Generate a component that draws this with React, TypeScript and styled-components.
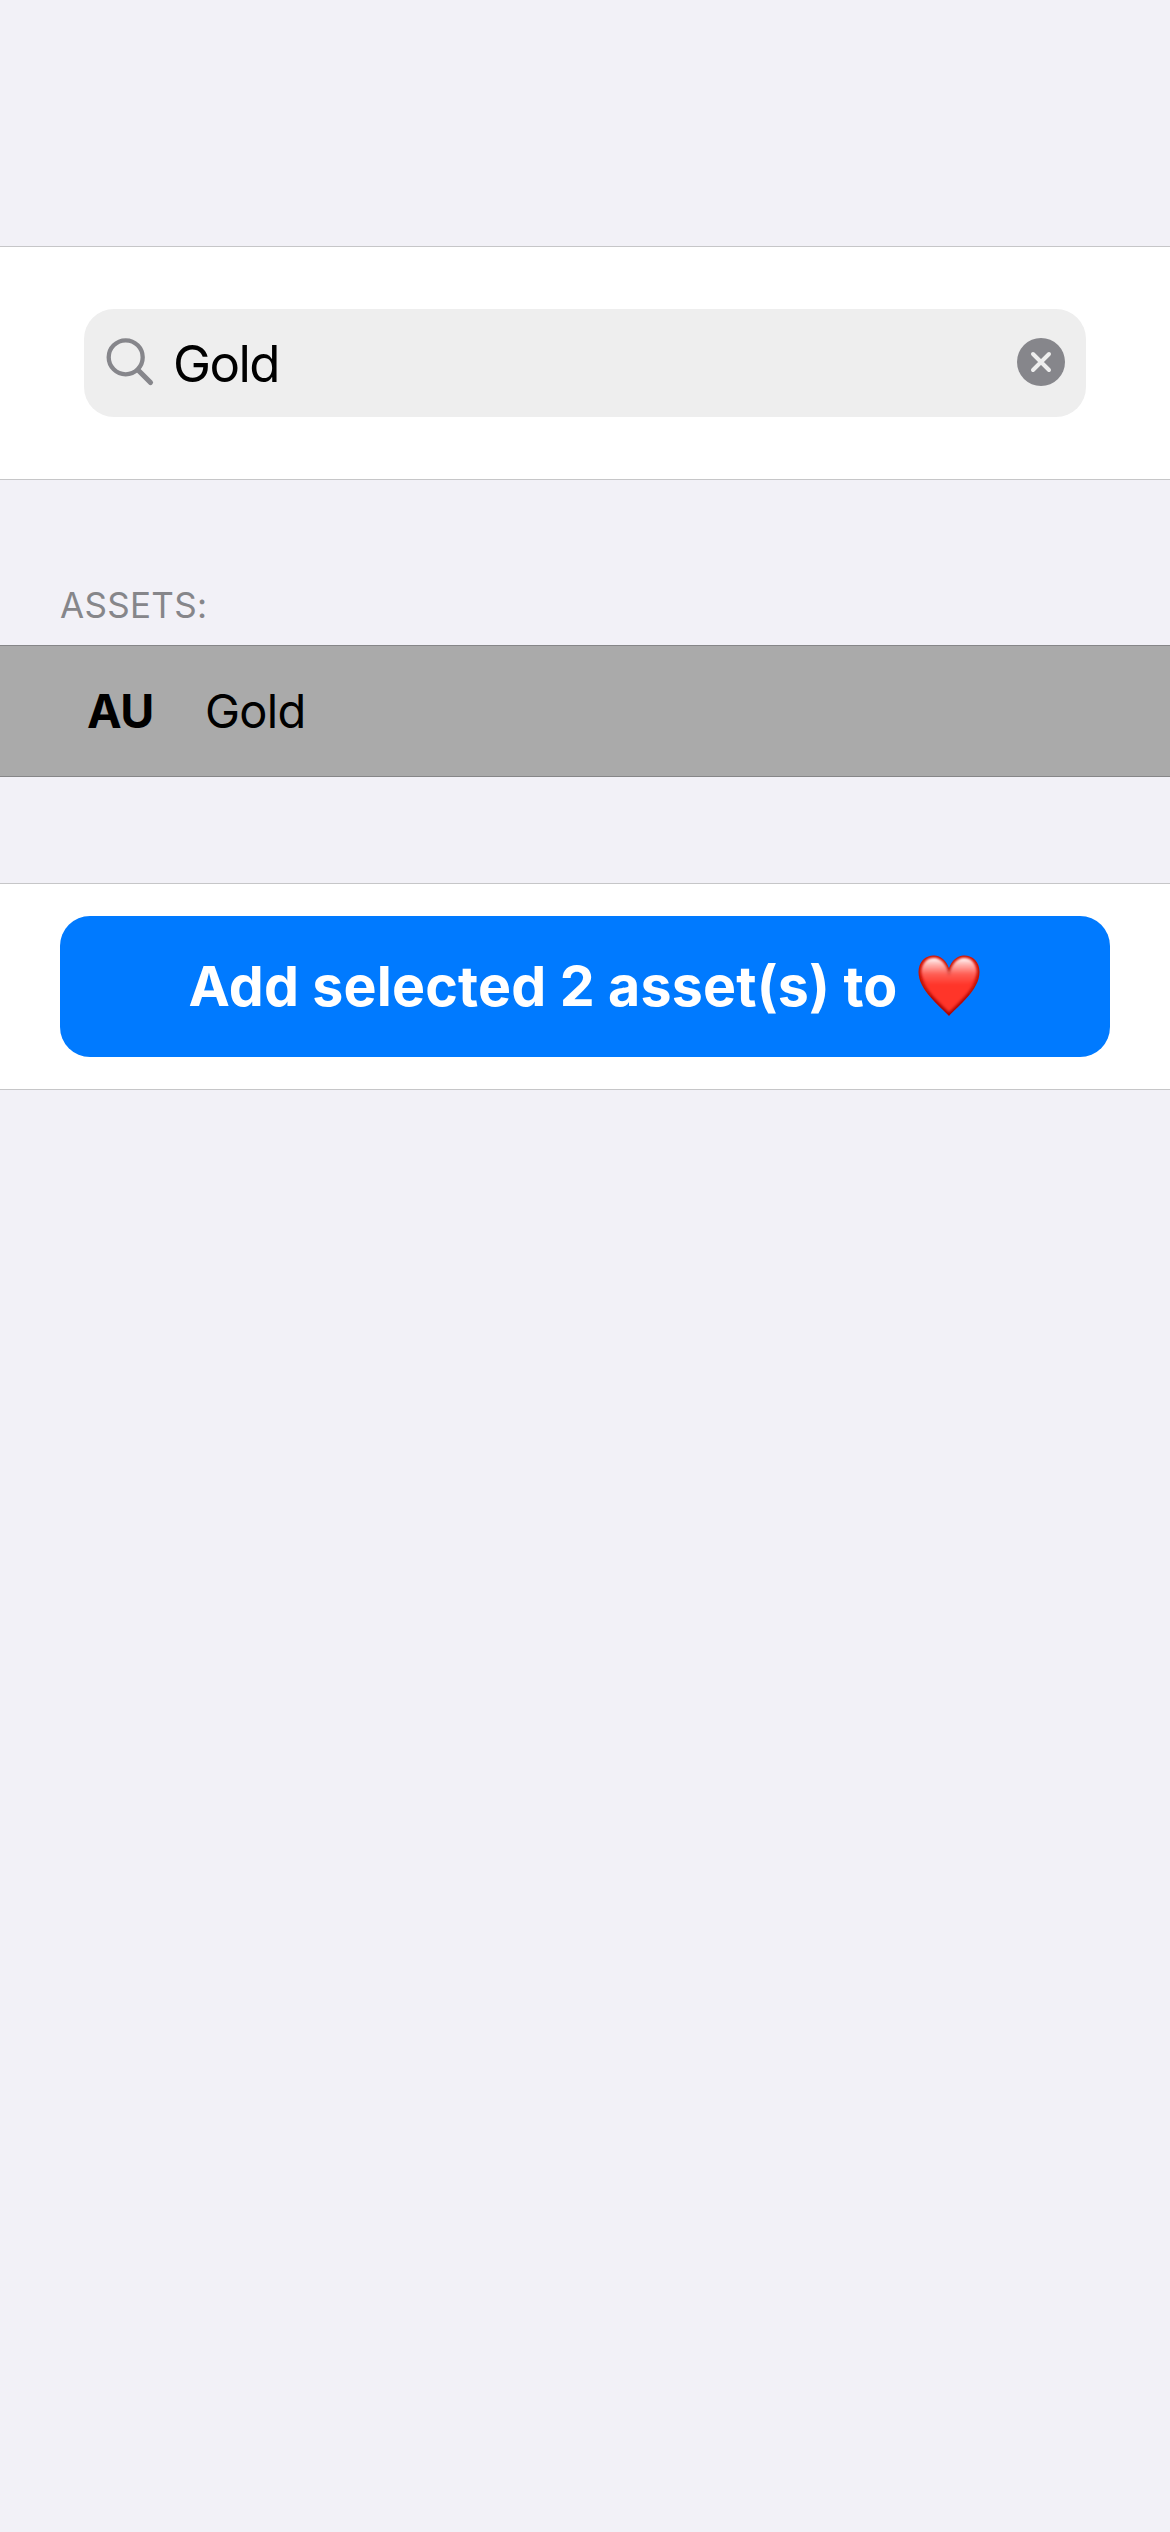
import React from "react";
import styled, { createGlobalStyle } from "styled-components";

const Global = createGlobalStyle`
  *{box-sizing:border-box}
  body{margin:0;background:#f2f1f7;font-family:Inter,"Liberation Sans",sans-serif;color:#000}
`;
const Page = styled.main`
  display:flex;flex-direction:column;width:1170px;height:2532px;padding-top:246px;background:#f2f1f7;
`;
const SearchSection = styled.section`
  height:234px;padding:62px 84px;background:#fff;border-top:1px solid #c6c6c8;border-bottom:1px solid #c6c6c8;
`;
const Field = styled.div`
  display:flex;align-items:center;height:108px;padding:0 21px;border-radius:30px;background:#eee;
`;
const SearchIcon = styled.svg`
  width:52px;height:52px;margin-bottom:2px;
`;
const ClearIcon = styled.svg`
  width:48px;height:48px;margin-bottom:2px;
`;
const Query = styled.span`
  flex:1;margin-left:16px;font-size:51px;line-height:60px;letter-spacing:-1.6px;padding-top:1px;
`;
const Heading = styled.h2`
  margin:101px 0 0;padding:0 60px;height:64px;font-size:35px;line-height:48px;font-weight:400;letter-spacing:.3px;color:#86868a;
`;
const AssetRow = styled.div`
  display:flex;align-items:center;height:132px;padding:0 87px;background:#aaa;border-top:1px solid #868688;border-bottom:1px solid #868688;
`;
const Ticker = styled.strong`
  width:118px;font-size:46.5px;font-weight:700;line-height:56px;letter-spacing:-.6px;
`;
const Name = styled.span`
  font-size:47px;line-height:56px;letter-spacing:-.7px;
`;
const ActionSection = styled.section`
  margin-top:106px;height:207px;padding:32px 60px;background:#fff;border-top:1px solid #c6c6c8;border-bottom:1px solid #c6c6c8;
`;
const AddButton = styled.button`
  display:flex;align-items:center;justify-content:center;gap:20px;width:100%;height:141px;padding:0 2px 2px 0;border:0;border-radius:30px;background:#007aff;color:#fff;font:650 55.5px Inter,sans-serif;letter-spacing:.16px;
`;
const Heart = styled.svg`
  width:62px;height:62px;flex:none;
`;

const heartShape = "M31 61C22 51 .5 35 .5 17C.5 7 7 .5 16 .5C23 .5 28.500 6 31 13.500C33.500 6 39 .5 46 .5C55 .5 61.500 7 61.500 17C61.500 35 40 51 31 61Z";

function HeartIcon() {
  return (
    <Heart viewBox="0 0 62 62" aria-hidden="true">
      <defs>
        <clipPath id="outline"><path d={heartShape} /></clipPath>
        <filter id="soft" x="-20%" y="-20%" width="140%" height="140%"><feGaussianBlur stdDeviation="1.500" /></filter>
        <filter id="glow" x="-20%" y="-20%" width="140%" height="140%"><feGaussianBlur stdDeviation=".8" /></filter>
        <linearGradient id="edge" x1="0" y1="0" x2="0" y2="1">
          <stop offset="0" stopColor="#c40a04" /><stop offset="1" stopColor="#a00500" />
        </linearGradient>
        <linearGradient id="gloss" gradientUnits="userSpaceOnUse" x1="0" y1="3" x2="0" y2="30">
          <stop offset="0" stopColor="#fff" /><stop offset=".2" stopColor="#fff" stopOpacity=".68" /><stop offset=".6" stopColor="#fff" stopOpacity=".2" /><stop offset="1" stopColor="#fff" stopOpacity="0" />
        </linearGradient>
      </defs>
      <g clipPath="url(#outline)">
        <path d={heartShape} fill="#ff3529" />
        <path d={heartShape} fill="none" stroke="url(#edge)" strokeWidth="4.500" filter="url(#soft)" />
        <path d="M31 34C18 34 3.500 28 3.500 16C4.500 7.500 9.500 3 16 3C23 3 28 9.500 31 17.500C34 9.500 39 3 46 3C52.500 3 57.500 7.500 58.500 16C58.500 28 44 34 31 34Z" fill="url(#gloss)" filter="url(#glow)" />
      </g>
    </Heart>
  );
}

export default function App() {
  return (
    <Page>
      <Global />
      <SearchSection>
        <Field>
          <SearchIcon viewBox="0 0 52 52" fill="none" stroke="#86868b" strokeLinecap="round">
            <circle cx="20.700" cy="21.300" r="17" strokeWidth="4.300" />
            <path d="M33 34L45.500 46.500" strokeWidth="5.200" />
          </SearchIcon>
          <Query>Gold</Query>
          <ClearIcon viewBox="0 0 48 48">
            <circle cx="24" cy="24" r="24" fill="#86868b" />
            <path d="M16 16L32 32M32 16L16 32" stroke="#eee" strokeWidth="4" strokeLinecap="round" />
          </ClearIcon>
        </Field>
      </SearchSection>
      <Heading>ASSETS:</Heading>
      <AssetRow>
        <Ticker>AU</Ticker>
        <Name>Gold</Name>
      </AssetRow>
      <ActionSection>
        <AddButton>
          <span>Add selected 2 asset(s) to</span>
          <HeartIcon />
        </AddButton>
      </ActionSection>
    </Page>
  );
}
